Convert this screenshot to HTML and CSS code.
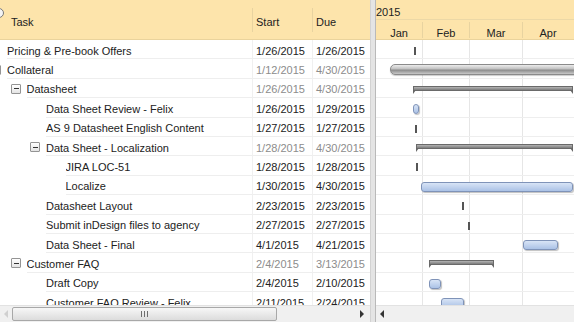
FILE: index.html
```html
<!DOCTYPE html>
<html lang="en">
<head>
    <meta charset="UTF-8">
    <meta name="viewport" content="width=device-width, initial-scale=1.0">
    <title>Project Gantt</title>
    <link rel="stylesheet" href="styles.css">
</head>
<body>
    <div class="gantt">
        <div class="grid-pane">
            <div class="grid-head">
                <div class="hcol col-task"><span class="head-icon"></span>Task</div>
                <div class="hcol col-start">Start</div>
                <div class="hcol col-due">Due</div>
            </div>
            <div class="grid-body">
                <div class="row">
                    <div class="task lv0"><span class="slot"></span><span class="name">Pricing &amp; Pre-book Offers</span></div>
                    <div class="date col-start">1/26/2015</div>
                    <div class="date col-due">1/26/2015</div>
                </div>
                <div class="row summary-row">
                    <div class="task lv0"><span class="slot"><span class="toggle"></span></span><span class="name">Collateral</span></div>
                    <div class="date col-start">1/12/2015</div>
                    <div class="date col-due">4/30/2015</div>
                </div>
                <div class="row summary-row">
                    <div class="task lv1"><span class="slot"><span class="toggle"></span></span><span class="name">Datasheet</span></div>
                    <div class="date col-start">1/26/2015</div>
                    <div class="date col-due">4/30/2015</div>
                </div>
                <div class="row">
                    <div class="task lv2"><span class="slot"></span><span class="name">Data Sheet Review - Felix</span></div>
                    <div class="date col-start">1/26/2015</div>
                    <div class="date col-due">1/29/2015</div>
                </div>
                <div class="row">
                    <div class="task lv2"><span class="slot"></span><span class="name">AS 9 Datasheet English Content</span></div>
                    <div class="date col-start">1/27/2015</div>
                    <div class="date col-due">1/27/2015</div>
                </div>
                <div class="row summary-row">
                    <div class="task lv2"><span class="slot"><span class="toggle"></span></span><span class="name">Data Sheet - Localization</span></div>
                    <div class="date col-start">1/28/2015</div>
                    <div class="date col-due">4/30/2015</div>
                </div>
                <div class="row">
                    <div class="task lv3"><span class="slot"></span><span class="name">JIRA LOC-51</span></div>
                    <div class="date col-start">1/28/2015</div>
                    <div class="date col-due">1/28/2015</div>
                </div>
                <div class="row">
                    <div class="task lv3"><span class="slot"></span><span class="name">Localize</span></div>
                    <div class="date col-start">1/30/2015</div>
                    <div class="date col-due">4/30/2015</div>
                </div>
                <div class="row">
                    <div class="task lv2"><span class="slot"></span><span class="name">Datasheet Layout</span></div>
                    <div class="date col-start">2/23/2015</div>
                    <div class="date col-due">2/23/2015</div>
                </div>
                <div class="row">
                    <div class="task lv2"><span class="slot"></span><span class="name">Submit inDesign files to agency</span></div>
                    <div class="date col-start">2/27/2015</div>
                    <div class="date col-due">2/27/2015</div>
                </div>
                <div class="row">
                    <div class="task lv2"><span class="slot"></span><span class="name">Data Sheet - Final</span></div>
                    <div class="date col-start">4/1/2015</div>
                    <div class="date col-due">4/21/2015</div>
                </div>
                <div class="row summary-row">
                    <div class="task lv1"><span class="slot"><span class="toggle"></span></span><span class="name">Customer FAQ</span></div>
                    <div class="date col-start">2/4/2015</div>
                    <div class="date col-due">3/13/2015</div>
                </div>
                <div class="row">
                    <div class="task lv2"><span class="slot"></span><span class="name">Draft Copy</span></div>
                    <div class="date col-start">2/4/2015</div>
                    <div class="date col-due">2/10/2015</div>
                </div>
                <div class="row">
                    <div class="task lv2"><span class="slot"></span><span class="name">Customer FAQ Review - Felix</span></div>
                    <div class="date col-start">2/11/2015</div>
                    <div class="date col-due">2/24/2015</div>
                </div>
            </div>
            <div class="hscroll">
                <span class="arrow arrow-left off"></span>
                <span class="thumb"><span class="grip"></span></span>
                <span class="track-rest"></span>
                <span class="arrow arrow-right"></span>
            </div>
        </div>

        <div class="splitter"></div>

        <div class="chart-pane">
            <div class="chart-head">
                <div class="year">2015</div>
                <div class="months">
                    <div class="month m-jan">Jan</div>
                    <div class="month m-feb">Feb</div>
                    <div class="month m-mar">Mar</div>
                    <div class="month m-apr">Apr</div>
                </div>
            </div>
            <div class="chart-body">
                <div class="crow"><span class="milestone" style="left: 38px"></span></div>
                <div class="crow"><span class="rollup" style="left: 14px; width: 200px"></span></div>
                <div class="crow"><span class="bracket" style="left: 37px; width: 160px"></span></div>
                <div class="crow"><span class="bar" style="left: 37px; width: 6px"></span></div>
                <div class="crow"><span class="milestone" style="left: 39px"></span></div>
                <div class="crow"><span class="bracket" style="left: 40px; width: 157px"></span></div>
                <div class="crow"><span class="milestone" style="left: 40px"></span></div>
                <div class="crow"><span class="bar" style="left: 45px; width: 152px"></span></div>
                <div class="crow"><span class="milestone" style="left: 86px"></span></div>
                <div class="crow"><span class="milestone" style="left: 92px"></span></div>
                <div class="crow"><span class="bar" style="left: 147px; width: 35px"></span></div>
                <div class="crow"><span class="bracket" style="left: 53px; width: 65px"></span></div>
                <div class="crow"><span class="bar" style="left: 53px; width: 12px"></span></div>
                <div class="crow"><span class="bar" style="left: 65px; width: 23px"></span></div>
            </div>
            <div class="hscroll">
                <span class="arrow arrow-left"></span>
                <span class="track-rest"></span>
            </div>
        </div>
    </div>
</body>
</html>
```

FILE: styles.css
```css
body {
    margin: 0;
    font-family: "Liberation Sans", Arial, sans-serif;
    font-size: 11px;
    color: #222;
    background-color: #fff;
}
.gantt {
    display: flex;
    width: 574px;
    height: 322px;
    overflow: hidden;
}

/* left grid */
.grid-pane {
    flex: none;
    width: 370px;
    display: flex;
    flex-direction: column;
    overflow: hidden;
}
.grid-head {
    flex: none;
    height: 40px;
    margin-left: -13px;
    display: flex;
    align-items: center;
    background-color: #fde4ab;
    border-bottom: 1px solid #ead39c;
    box-sizing: border-box;
}
.hcol {
    height: 24px;
    display: flex;
    align-items: center;
    box-sizing: border-box;
    padding-left: 3px;
    padding-top: 4px;
}
.hcol + .hcol {
    border-left: 1px solid #e8d3a0;
}
.grid-head .col-task {
    padding-left: 7px;
}
.col-task {
    width: 265px;
}
.col-start {
    width: 60px;
}
.col-due {
    width: 58px;
}
.head-icon {
    width: 8px;
    height: 8px;
    border: 1px solid #777;
    border-radius: 50%;
    margin-right: 7px;
    margin-top: -18px;
    background-color: #f4f4f4;
}
.grid-body {
    flex: 1;
    overflow: hidden;
}
.row {
    display: flex;
    height: 19.4px;
    margin-left: -13px;
}
.task {
    width: 265px;
    display: flex;
    box-sizing: border-box;
}
.lv0 { padding-left: 4px; }
.lv1 { padding-left: 23.5px; }
.lv2 { padding-left: 43px; }
.lv3 { padding-left: 62.5px; }
.slot {
    flex: none;
    width: 16px;
    display: flex;
    align-items: center;
    padding-top: 1px;
}
.toggle {
    position: relative;
    width: 8px;
    height: 8px;
    border: 1px solid #949494;
    border-radius: 1px;
    background: linear-gradient(#ffffff, #e4e4e4);
}
.toggle::after {
    content: "";
    position: absolute;
    left: 2px;
    top: 3.5px;
    width: 5px;
    height: 1px;
    background-color: #333;
}
.name {
    flex: 1;
    display: flex;
    align-items: center;
    padding-top: 3px;
    white-space: nowrap;
    overflow: hidden;
    border-bottom: 1px solid #eeeeee;
}
.date {
    display: flex;
    align-items: center;
    padding-left: 3px;
    padding-top: 3px;
    box-sizing: border-box;
    border-left: 1px solid #f0f0f0;
    border-bottom: 1px solid #eeeeee;
}
.summary-row .date {
    color: #8c8c8c;
}

/* scrollbars */
.hscroll {
    flex: none;
    height: 17px;
    display: flex;
    align-items: center;
    background-color: #f0f0f0;
    border-top: 1px solid #e2e2e2;
    box-sizing: border-box;
}
.arrow {
    flex: none;
    width: 14px;
    height: 16px;
    display: flex;
    align-items: center;
    justify-content: center;
}
.arrow::after {
    content: "";
    border-top: 4px solid transparent;
    border-bottom: 4px solid transparent;
}
.arrow-left {
    width: 12px;
}
.arrow-left::after {
    border-right: 4px solid #333;
}
.arrow-left.off::after {
    border-right-color: #d0d0d0;
}
.arrow-right {
    width: 17px;
}
.arrow-right::after {
    border-left: 4px solid #333;
}
.thumb {
    flex: none;
    width: 265px;
    height: 14px;
    display: flex;
    align-items: center;
    justify-content: center;
    box-sizing: border-box;
    border: 1px solid #a8a8a8;
    border-radius: 2px;
    background: linear-gradient(#f7f7f7, #dcdcdc);
}
.grip {
    width: 7px;
    height: 6px;
    background: repeating-linear-gradient(to right, #6e6e6e 0 1px, transparent 1px 3px);
}
.track-rest {
    flex: 1;
}

.splitter {
    flex: none;
    width: 6px;
    box-sizing: border-box;
    background-color: #e4e4e4;
    border-left: 1px solid #d2d2d2;
    border-right: 1px solid #b9b9b9;
}

/* chart */
.chart-pane {
    flex: 1;
    display: flex;
    flex-direction: column;
    overflow: hidden;
}
.chart-head {
    flex: none;
    height: 40px;
    background-color: #fde4ab;
    border-bottom: 1px solid #ead39c;
    box-sizing: border-box;
}
.year {
    height: 20px;
    line-height: 20px;
    padding-top: 2px;
    border-bottom: 1px solid #ecd8a6;
    box-sizing: border-box;
    white-space: nowrap;
}
.months {
    display: flex;
    align-items: center;
    height: 19px;
}
.month {
    flex: none;
    height: 16px;
    line-height: 16px;
    padding-top: 3px;
    text-align: center;
    box-sizing: border-box;
    border-right: 1px solid #e8d3a0;
}
.m-jan { width: 47px; }
.m-feb { width: 47px; }
.m-mar { width: 53px; }
.m-apr { width: 50px; border-right: none; }
.chart-body {
    flex: 1;
    overflow: hidden;
    background-image: linear-gradient(to right,
        transparent 46px, #e6e6e6 46px, #e6e6e6 47px, transparent 47px,
        transparent 93px, #e6e6e6 93px, #e6e6e6 94px, transparent 94px,
        transparent 146px, #e6e6e6 146px, #e6e6e6 147px, transparent 147px);
}
.crow {
    position: relative;
    height: 19.4px;
    box-sizing: border-box;
    border-bottom: 1px solid #eeeeee;
}
.milestone {
    position: absolute;
    top: 7px;
    width: 2px;
    height: 8px;
    background-color: #555;
}
.bar {
    position: absolute;
    top: 6px;
    height: 10px;
    box-sizing: border-box;
    border: 1px solid #7f93b8;
    border-radius: 3px;
    background: linear-gradient(#d8e4f6, #abc2e6);
    box-shadow: 1px 1px 1px rgba(0, 0, 0, 0.25);
}
.rollup {
    position: absolute;
    top: 5px;
    height: 11px;
    box-sizing: border-box;
    border: 1px solid #8a8a8a;
    border-radius: 5px;
    background: linear-gradient(#ececec 0%, #c4c4c4 40%, #8e8e8e 58%, #c8c8c8 100%);
    box-shadow: 0 1px 1px rgba(0, 0, 0, 0.2);
}
.bracket {
    position: absolute;
    top: 7px;
    height: 5px;
    box-sizing: border-box;
    border: 1px solid #6a6a6a;
    background: linear-gradient(#b4b4b4, #7c7c7c);
}
.bracket::before,
.bracket::after {
    content: "";
    position: absolute;
    top: 100%;
    border-bottom: 4px solid transparent;
}
.bracket::before {
    left: -1px;
    border-left: 3px solid #666;
}
.bracket::after {
    right: -1px;
    border-right: 3px solid #666;
}
```
